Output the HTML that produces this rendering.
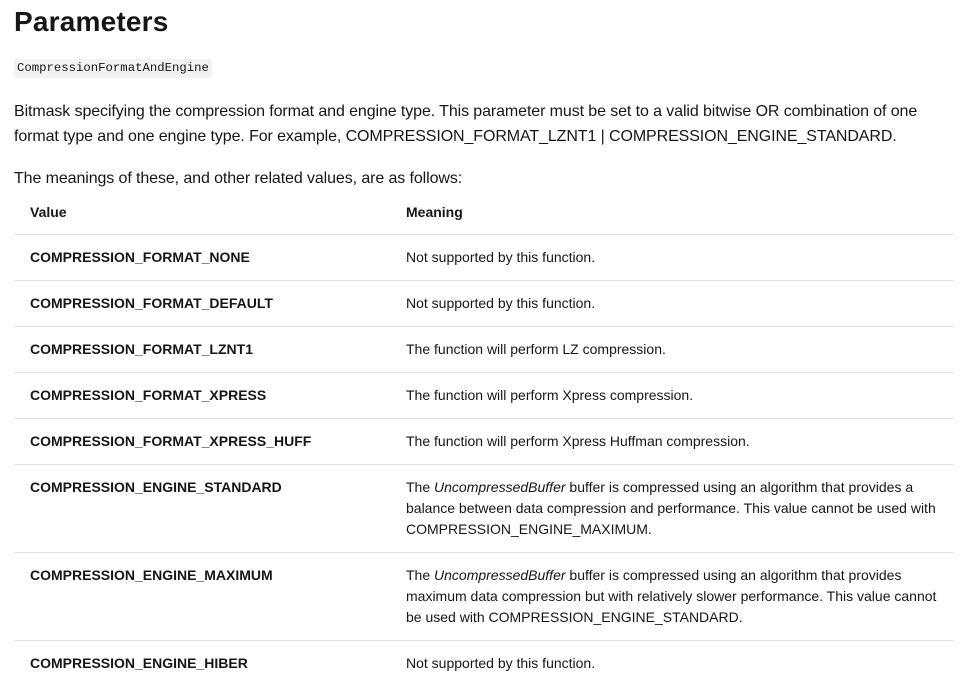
<!DOCTYPE html>
<html><head><meta charset="utf-8"><style>
body{margin:0;background:#fff;font-family:"Segoe UI","Liberation Sans",sans-serif;color:#161616;width:969px;height:689px;overflow:hidden}
.w{position:absolute;left:14px;top:0;width:940px}
h2{font-size:28px;font-weight:600;margin:0;position:absolute;top:4px;left:0;line-height:36px;letter-spacing:0.2px}
code{position:absolute;top:59px;left:0;background:#f2f2f2;border-radius:3px;font-family:"Liberation Mono",monospace;font-size:12.3px;padding:2px 3px;line-height:15px;color:#161616}
p{position:absolute;left:0;margin:0;font-size:16px;line-height:25px;width:940px;letter-spacing:-0.1px}
table{position:absolute;top:191px;left:0;width:940px;border-collapse:collapse;font-size:14px;line-height:21px}
th{text-align:left;font-weight:600;padding:11px 16px 11px 16px;border-bottom:1px solid #e3e3e3;font-size:14px}
td{padding:12px 16px 12px 16px;vertical-align:top;border-top:1px solid #e3e3e3}
td:first-child{font-weight:600;width:344px}
</style></head><body><div class="w">
<h2>Parameters</h2>
<code>CompressionFormatAndEngine</code>
<p style="top:99px">Bitmask specifying the compression format and engine type. This parameter must be set to a valid bitwise OR combination of one format type and one engine type. For example, COMPRESSION_FORMAT_LZNT1 | COMPRESSION_ENGINE_STANDARD.</p>
<p style="top:166px">The meanings of these, and other related values, are as follows:</p>
<table>
<tr><th>Value</th><th>Meaning</th></tr>
<tr><td>COMPRESSION_FORMAT_NONE</td><td>Not supported by this function.</td></tr>
<tr><td>COMPRESSION_FORMAT_DEFAULT</td><td>Not supported by this function.</td></tr>
<tr><td>COMPRESSION_FORMAT_LZNT1</td><td>The function will perform LZ compression.</td></tr>
<tr><td>COMPRESSION_FORMAT_XPRESS</td><td>The function will perform Xpress compression.</td></tr>
<tr><td>COMPRESSION_FORMAT_XPRESS_HUFF</td><td>The function will perform Xpress Huffman compression.</td></tr>
<tr><td>COMPRESSION_ENGINE_STANDARD</td><td>The <i>UncompressedBuffer</i> buffer is compressed using an algorithm that provides a balance between data compression and performance. This value cannot be used with COMPRESSION_ENGINE_MAXIMUM.</td></tr>
<tr><td>COMPRESSION_ENGINE_MAXIMUM</td><td>The <i>UncompressedBuffer</i> buffer is compressed using an algorithm that provides maximum data compression but with relatively slower performance. This value cannot be used with COMPRESSION_ENGINE_STANDARD.</td></tr>
<tr><td>COMPRESSION_ENGINE_HIBER</td><td>Not supported by this function.</td></tr>
</table>
</div></body></html>
